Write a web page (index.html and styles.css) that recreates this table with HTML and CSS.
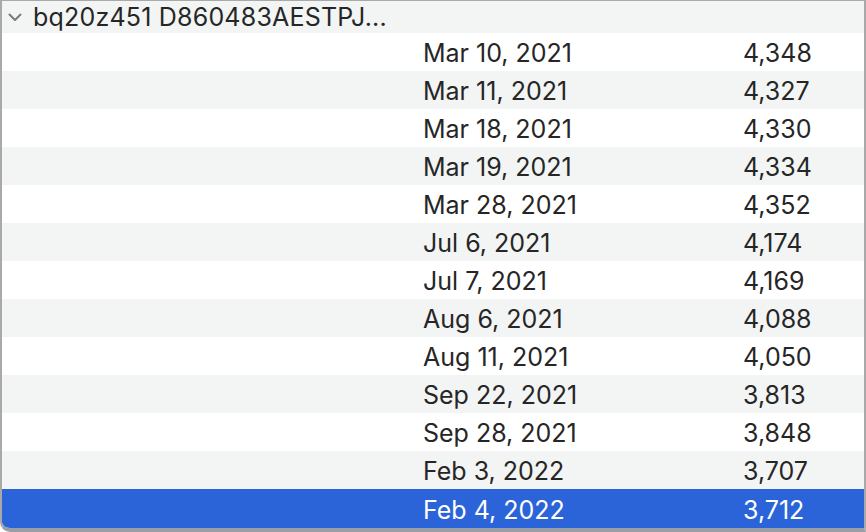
FILE: index.html
```html
<!DOCTYPE html>
<html>
<head>
<meta charset="utf-8">
<link rel="stylesheet" href="styles.css">
</head>
<body>
<div class="table">
  <div class="group">
    <svg class="chev" width="14" height="9" viewBox="0 0 14 9"><path d="M1.5 1.5 L7 7 L12.5 1.5" fill="none" stroke="#7a7a7a" stroke-width="2" stroke-linecap="round" stroke-linejoin="round"/></svg>
    <span class="gtitle">bq20z451 D860483AESTPJ...</span>
  </div>
  <div class="row"><span class="date">Mar 10, 2021</span><span class="num">4,348</span></div>
  <div class="row alt"><span class="date">Mar 11, 2021</span><span class="num">4,327</span></div>
  <div class="row"><span class="date">Mar 18, 2021</span><span class="num">4,330</span></div>
  <div class="row alt"><span class="date">Mar 19, 2021</span><span class="num">4,334</span></div>
  <div class="row"><span class="date">Mar 28, 2021</span><span class="num">4,352</span></div>
  <div class="row alt"><span class="date">Jul 6, 2021</span><span class="num">4,174</span></div>
  <div class="row"><span class="date">Jul 7, 2021</span><span class="num">4,169</span></div>
  <div class="row alt"><span class="date">Aug 6, 2021</span><span class="num">4,088</span></div>
  <div class="row"><span class="date">Aug 11, 2021</span><span class="num">4,050</span></div>
  <div class="row alt"><span class="date">Sep 22, 2021</span><span class="num">3,813</span></div>
  <div class="row"><span class="date">Sep 28, 2021</span><span class="num">3,848</span></div>
  <div class="row alt"><span class="date">Feb 3, 2022</span><span class="num">3,707</span></div>
  <div class="row sel"><span class="date">Feb 4, 2022</span><span class="num">3,712</span></div>
</div>
</body>
</html>
```
FILE: styles.css
```css
html, body {
  margin: 0;
  padding: 0;
  background: #ffffff;
}
body {
  font-family: Inter, "Liberation Sans", sans-serif;
  color: #262626;
}
.table {
  width: 866px;
  height: 532px;
  box-sizing: border-box;
  border: 1px solid #a9a9a9;
  border-bottom: 4px solid #9a9ea6;
  border-left-width: 2px;
  border-right-width: 2px;
  border-bottom-left-radius: 10px;
  overflow: hidden;
  display: flex;
  flex-direction: column;
}
.group {
  height: 32px;
  flex: none;
  background: #f3f4f4;
  display: flex;
  align-items: center;
  padding-left: 6px;
}
.chev {
  margin-right: 11px;
  margin-top: 1px;
}
.gtitle {
  font-size: 25px;
  letter-spacing: 0.2px;
  line-height: 30px;
}
.row {
  height: 38px;
  box-sizing: border-box;
  padding-top: 2px;
  flex: none;
  display: flex;
  align-items: center;
  font-size: 25px;
  line-height: 30px;
  background: #ffffff;
}
.row.alt {
  background: #f3f4f4;
}
.row.sel {
  background: #2b63d9;
  color: #ffffff;
  height: 39px;
}
.date {
  margin-left: 421px;
  width: 320px;
}
```
